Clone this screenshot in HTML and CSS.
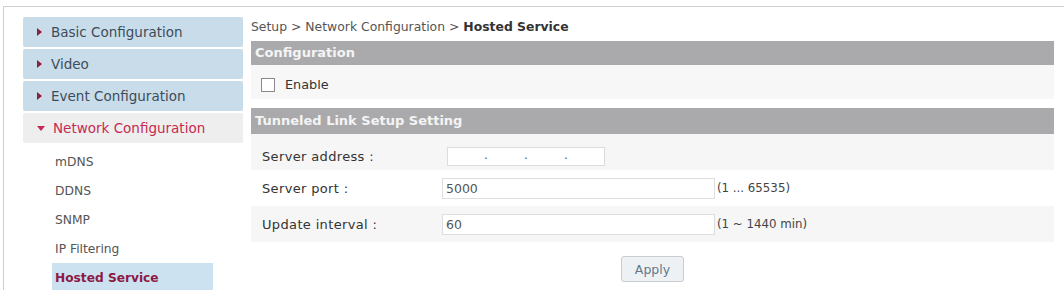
FILE: index.html
```html
<!DOCTYPE html>
<html lang="en">
<head>
    <meta charset="UTF-8">
    <title>Hosted Service</title>
    <link rel="stylesheet" href="styles.css">
</head>
<body>
    <div class="frame">
        <div class="sidebar">
            <div class="menu-item"><span class="arrow"></span>Basic Configuration</div>
            <div class="menu-item"><span class="arrow"></span>Video</div>
            <div class="menu-item"><span class="arrow"></span>Event Configuration</div>
            <div class="menu-item open"><span class="arrow down"></span>Network Configuration</div>
            <div class="submenu">
                <div class="sub-item">mDNS</div>
                <div class="sub-item">DDNS</div>
                <div class="sub-item">SNMP</div>
                <div class="sub-item">IP Filtering</div>
                <div class="sub-item active">Hosted Service</div>
            </div>
        </div>

        <div class="content">
            <div class="breadcrumb">Setup &gt; Network Configuration &gt; <b>Hosted Service</b></div>

            <div class="section-title">Configuration</div>
            <div class="enable-row">
                <span class="checkbox"></span>
                <span>Enable</span>
            </div>

            <div class="section-title tunnel">Tunneled Link Setup Setting</div>
            <div class="form-row shade first">
                <div class="label">Server address :</div>
                <div class="ip-box"><span>.</span><span>.</span><span>.</span></div>
            </div>
            <div class="form-row">
                <div class="label">Server port :</div>
                <div class="text-box">5000</div>
                <div class="range">(1 ... 65535)</div>
            </div>
            <div class="form-row shade">
                <div class="label">Update interval :</div>
                <div class="text-box">60</div>
                <div class="range">(1 ~ 1440 min)</div>
            </div>

            <div class="actions">
                <button class="apply">Apply</button>
            </div>
        </div>
    </div>
</body>
</html>
```

FILE: styles.css
```css
*{
    margin: 0;
    padding: 0;
    box-sizing: border-box;
}
body{
    background: #fff;
    font-family: "DejaVu Sans", Verdana, sans-serif;
    font-size: 11px;
    color: #333;
}
.frame{
    display: flex;
    margin: 6px 0 0 3px;
    height: 284px;
    overflow: hidden;
    border-top: 1px solid #cfcfcf;
    border-left: 1px solid #cfcfcf;
    padding: 10px 0 0 19px;
}

/* left menu */
.sidebar{
    width: 220px;
    flex-shrink: 0;
}
.menu-item{
    display: flex;
    align-items: center;
    height: 30px;
    margin-bottom: 2px;
    padding-left: 14px;
    background-color: #c9dcea;
    border-radius: 2px;
    color: #3d4c5a;
    font-size: 13.5px;
}
.menu-item.open{
    background-color: #eeeeee;
    color: #c62a52;
}
.arrow{
    width: 0;
    height: 0;
    margin-right: 9px;
    border-top: 4px solid transparent;
    border-bottom: 4px solid transparent;
    border-left: 5px solid #8e1d3f;
}
.arrow.down{
    border-left: 4px solid transparent;
    border-right: 4px solid transparent;
    border-top: 5px solid #c62a52;
    border-bottom: none;
    margin-right: 8px;
}
.submenu{
    margin-top: 4px;
    padding-left: 29px;
}
.sub-item{
    display: flex;
    align-items: center;
    width: 161px;
    height: 29px;
    padding-left: 3px;
    color: #555;
    font-size: 12.3px;
}
.sub-item.active{
    background-color: #cde2f0;
    color: #8c1a45;
    font-weight: bold;
    font-size: 12.2px;
}

/* main area */
.content{
    width: 803px;
    margin-left: 8px;
}
.breadcrumb{
    height: 24px;
    line-height: 20px;
    color: #555;
    font-size: 12.4px;
}
.breadcrumb b{
    color: #333;
}
.section-title{
    height: 24px;
    line-height: 24px;
    padding-left: 4px;
    background-color: #aaaaac;
    color: #f4f4f4;
    font-weight: bold;
    font-size: 13px;
}
.section-title.tunnel{
    height: 26px;
    line-height: 26px;
}
.enable-row{
    display: flex;
    align-items: center;
    gap: 10px;
    height: 34px;
    padding: 5px 0 0 10px;
    margin-bottom: 9px;
    background-color: #f7f7f7;
    font-size: 12.8px;
}
.checkbox{
    width: 14px;
    height: 14px;
    border: 1px solid #8a8a8a;
    background: #fff;
}
.form-row{
    display: flex;
    align-items: center;
    height: 36px;
    padding-left: 11px;
    font-size: 12px;
}
.form-row.first{
    padding-top: 8px;
}
.form-row.shade{
    background-color: #f6f6f6;
}
.label{
    width: 180px;
    color: #333;
    font-size: 13px;
    letter-spacing: 0.35px;
}
.ip-box{
    display: flex;
    justify-content: space-around;
    width: 158px;
    height: 19px;
    margin-left: 5px;
    padding: 0 18px;
    border: 1px solid #dcdcdc;
    background: #fff;
    line-height: 14px;
    color: #555;
}
.text-box{
    width: 273px;
    height: 21px;
    line-height: 19px;
    padding-left: 3px;
    border: 1px solid #dedede;
    background: #fff;
    color: #555;
    font-size: 12.5px;
}
.range{
    margin-left: 2px;
    color: #444;
    font-size: 11.8px;
}
.actions{
    display: flex;
    justify-content: center;
    padding-top: 14px;
}
.apply{
    width: 63px;
    height: 26px;
    border: 1px solid #c9cdd2;
    border-radius: 3px;
    background-color: #eef1f4;
    color: #61788c;
    font-family: "DejaVu Sans", Verdana, sans-serif;
    font-size: 12.5px;
}
```
